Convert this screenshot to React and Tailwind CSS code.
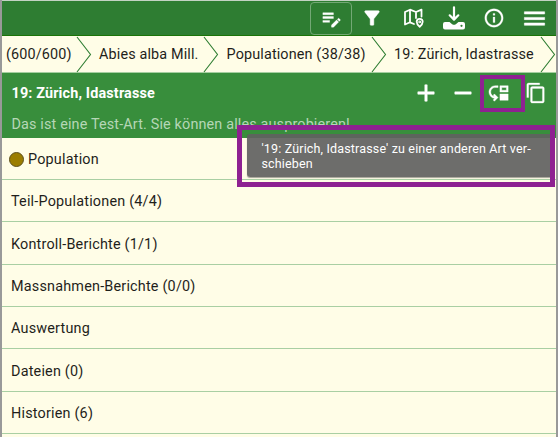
import { MdEditNote, MdInfoOutline, MdMenu, MdContentCopy, MdMoveDown, MdAdd, MdRemove, MdFilterAlt } from 'react-icons/md'

const crumbs = [
  { label: '(600/600)', box: 'w-[90px] pl-[4px]' },
  { label: 'Abies alba Mill.', box: 'w-[127px] pl-[7px]' },
  { label: 'Populationen (38/38)', box: 'w-[168px] pl-[7.500px]' },
  { label: '19: Zürich, Idastrasse', box: 'w-[169px] pl-[7px]' },
]

const rows = [
  'Population',
  'Teil-Populationen (4/4)',
  'Kontroll-Berichte (1/1)',
  'Massnahmen-Berichte (0/0)',
  'Auswertung',
  'Dateien (0)',
  'Historien (6)',
]

function MapPinIcon() {
  return (
    <svg width="22" height="20" viewBox="0 0 22 20" fill="none" stroke="white" strokeWidth="1.8" strokeLinejoin="round" strokeLinecap="round">
      <path d="M11 16 7 14.300 2 16.500V4l5-2.300 6 2.300 5.500-2.300V8.500M7 1.700V14M13 4v6" />
      <path d="M16.700 18.700s-3-2.500-3-4.900a3 3 0 0 1 6 0c0 2.400-3 4.900-3 4.900z" />
      <circle cx="16.700" cy="13.900" r=".5" />
    </svg>
  )
}

function DownloadIcon() {
  return (
    <svg width="24" height="24" viewBox="0 0 24 24" fill="none" stroke="white" strokeLinecap="round" strokeLinejoin="round">
      <path d="M12 1.300v12M7.700 9.300l4.300 4.300 4.300-4.300" strokeWidth="2.200" />
      <path d="M3 16h4.500l2.700 2.200q1.800 1.200 3.600 0l2.700-2.200H21q2 0 2 2v3.500q0 2-2 2H3q-2 0-2-2V18q0-2 2-2z" fill="white" stroke="none" />
      <circle cx="19.500" cy="19.800" r="1.100" fill="#2e7d32" stroke="none" />
    </svg>
  )
}

function Chevron() {
  return (
    <svg className="shrink-0" width="16" height="37" viewBox="0 0 16 37" fill="none" stroke="#2e7d32" strokeWidth="1.1">
      <path d="M1 1 14.500 18.500 1 36" />
    </svg>
  )
}

export default function App() {
  return (
    <div className="relative h-[437px] w-[558px] overflow-hidden border-x-2 border-[#999999] bg-[#fffde7] font-['Roboto',sans-serif] text-[14.400px] text-[#1f1f1b] [&_path[fill=none]]:hidden">
      <header className="flex h-[36px] items-center border-t border-b border-t-[#c3d3c3] border-b-[#1b7407] bg-[#2e7d32] text-white">
        <div className="ml-[308px] flex h-[33px] w-[42px] items-center justify-center rounded-[4px] border border-[#73a875]">
          <MdEditNote className="stroke-white stroke-[0.4]" size={23} />
        </div>
        <div className="ml-[7px] flex w-[25px] justify-center"><MdFilterAlt className="stroke-white stroke-[0.5]" size={22} /></div>
        <div className="ml-[19px] w-[22px]"><MapPinIcon /></div>
        <div className="ml-[17px] w-[24px]"><DownloadIcon /></div>
        <div className="ml-[17px] w-[22px]"><MdInfoOutline className="stroke-white stroke-[0.3]" size={22} /></div>
        <div className="ml-[16px] w-[28px]"><MdMenu className="stroke-white stroke-[0.5]" size={27} /></div>
      </header>

      <nav className="flex h-[37px] items-center border-b border-[#a5cfa0]">
        {crumbs.map((c) => (
          <div key={c.label} className={`flex shrink-0 items-center justify-between whitespace-nowrap ${c.box}`}>
            <span className="pt-[2px] tracking-[0.140px]">{c.label}</span>
            <Chevron />
          </div>
        ))}
      </nav>

      <section className="flex h-[64.500px] flex-col bg-[#388e3c] pl-[9.500px] text-white">
        <div className="flex h-[40px] items-center">
          <h1 className="w-[400px] pt-[2px] font-bold tracking-[0.15px]">19: Zürich, Idastrasse</h1>
          <MdAdd className="shrink-0 stroke-white stroke-[0.5]" size={28} />
          <MdRemove className="ml-[9px] shrink-0 stroke-white stroke-[0.5]" size={28} />
          <MdMoveDown className="ml-[11.500px] shrink-0 stroke-white stroke-[0.4]" size={22} />
          <MdContentCopy className="ml-[15px] shrink-0 stroke-white stroke-[0.3]" size={22} />
        </div>
        <p className="pt-px leading-[22px] tracking-[0.15px] text-[#b5d7b6]">Das ist eine Test-Art. Sie können alles ausprobieren!</p>
      </section>

      <ul>
        {rows.map((row, i) => (
          <li key={row} className="flex h-[42.400px] items-center border-b border-[#a9cfa3] pt-[2px] pl-[9px]">
            {i === 0 && <span className="-ml-[2px] mr-[4px] size-[15px] rounded-full border border-[#5d501d] bg-[#9b7d00]" />}
            <span className="pt-px tracking-[0.2px]">{row}</span>
          </li>
        ))}
      </ul>

      <div className="absolute top-[134px] left-[245px] h-[43px] w-[307px] whitespace-nowrap rounded-[3px] bg-[#616161]/92 px-[14.500px] pt-[8px] text-[12.500px] leading-[14.700px] tracking-[0.16px] text-white shadow-[0_1px_1px_#5558]">
        '19: Zürich, Idastrasse' zu einer anderen Art ver-<br />schieben
      </div>
      <div className="absolute top-[125px] left-[235px] h-[62px] w-[318px] border-[5px] border-[#8e2191]" />
      <div className="absolute top-[75px] left-[478px] h-[37px] w-[45px] border-[4.500px] border-[#8e2191]" />
    </div>
  )
}
